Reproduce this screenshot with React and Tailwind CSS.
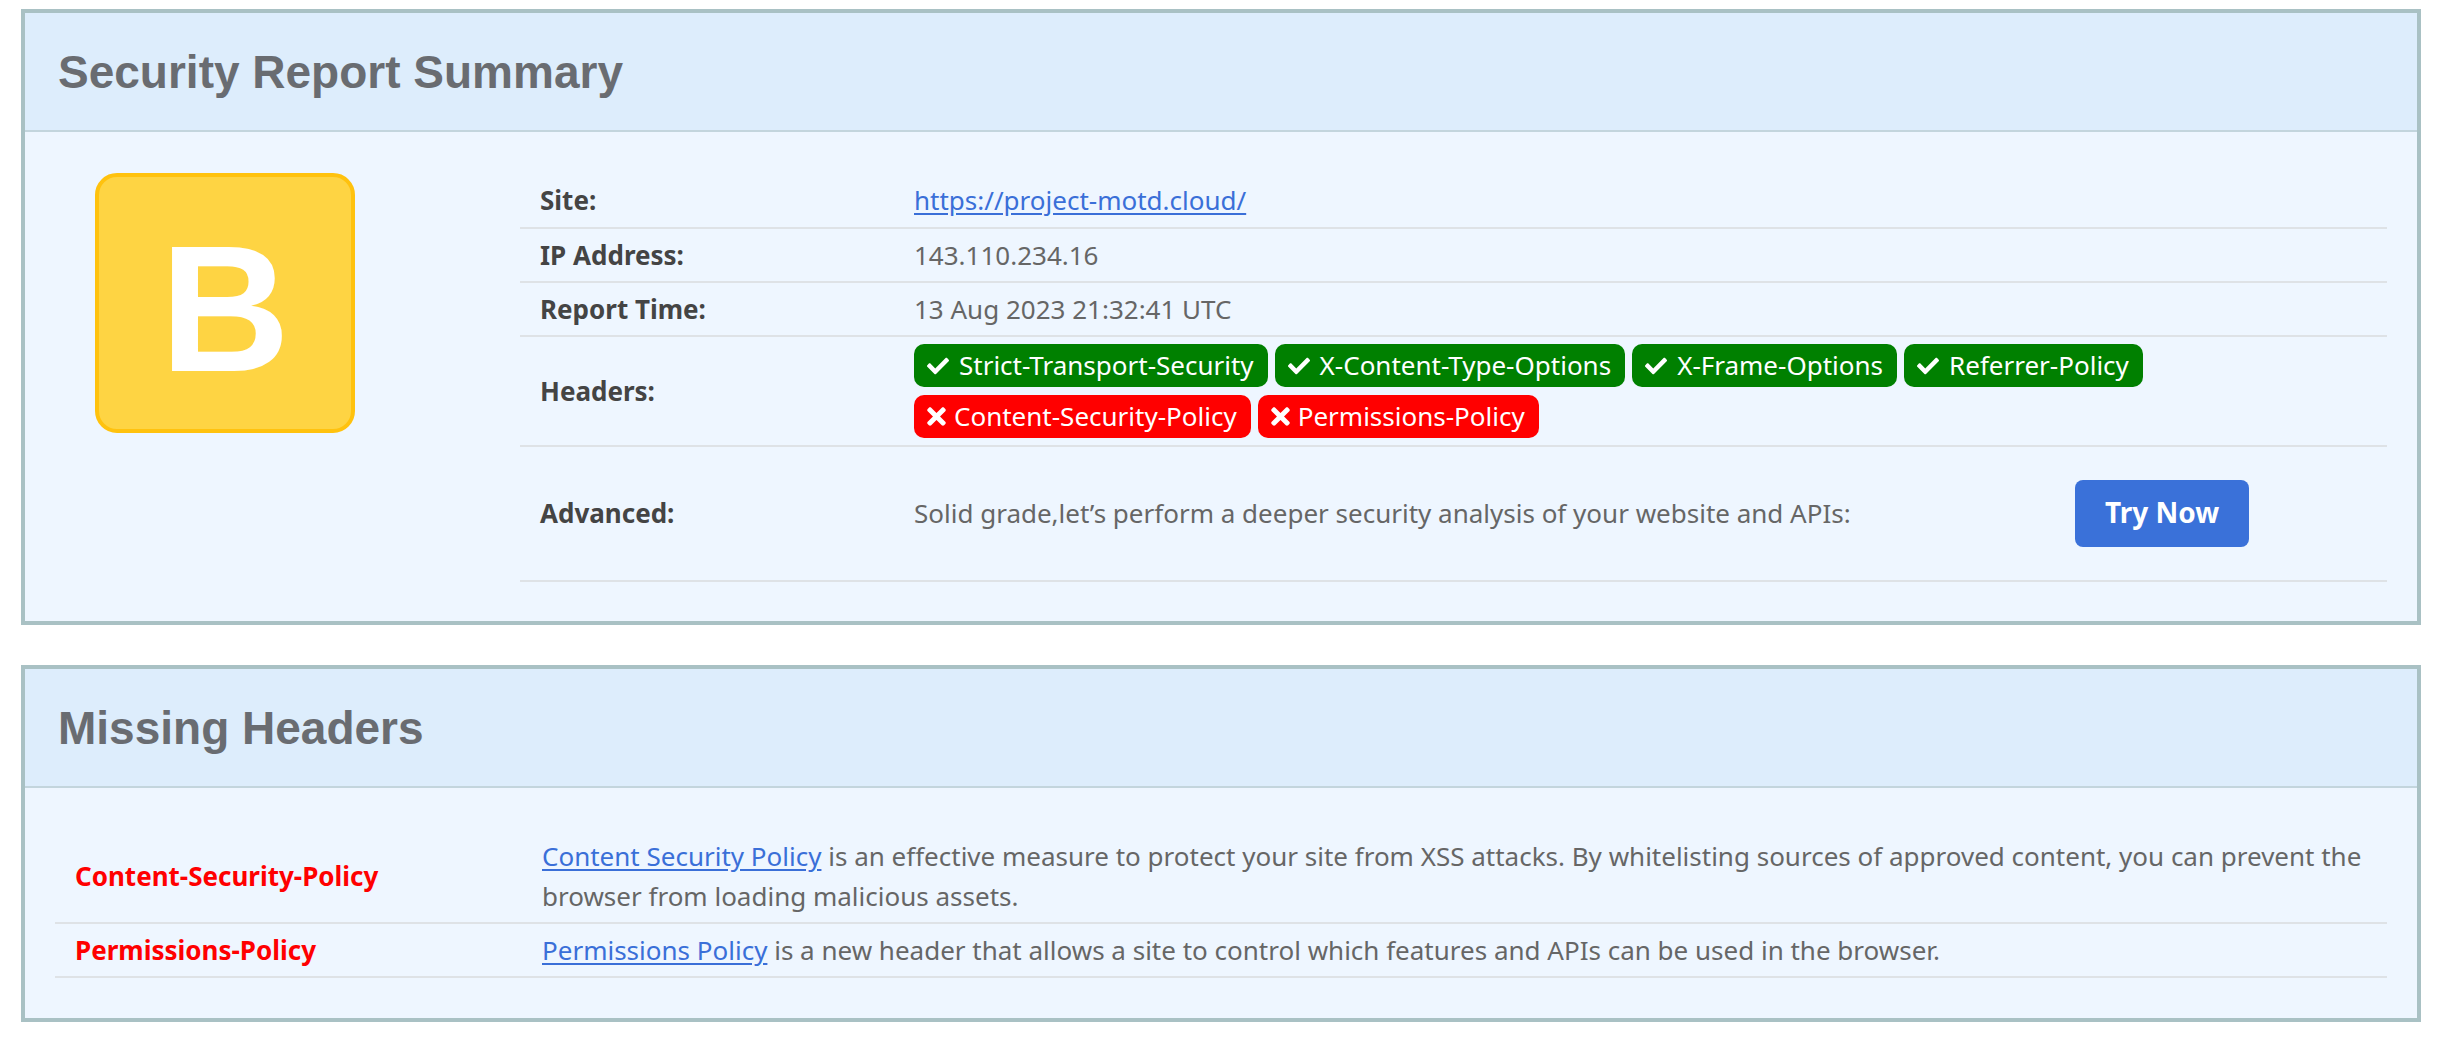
import React from "react";
import { FaCheck, FaTimes } from "react-icons/fa";

const GOOD = ["Strict-Transport-Security", "X-Content-Type-Options", "X-Frame-Options", "Referrer-Policy"];
const BAD = ["Content-Security-Policy", "Permissions-Policy"];

function Badge({ ok, children }) {
  return (
    <span
      className={
        ok
          ? "inline-flex h-[43px] items-center rounded-[10px] bg-[#008000] pl-[13px] pr-[14px] text-[26px] leading-none text-white"
          : "inline-flex h-[43px] items-center rounded-[10px] bg-[#ff0000] pl-[13px] pr-[14px] text-[26px] leading-none text-white"
      }
    >
      {ok ? (
        <FaCheck className="mr-[10px] h-[22px] w-[22px] shrink-0" />
      ) : (
        <FaTimes className="mr-[8px] h-[27px] w-[19px] shrink-0" />
      )}
      <span className="pb-[2px]">{children}</span>
    </span>
  );
}

function Row({ label, h, children }) {
  return (
    <div className={"flex items-center border-b-2 border-[#dee2e6] " + h}>
      <div className="w-[394px] shrink-0 pl-[20px] font-bold text-[#444444]">{label}</div>
      <div className="flex min-w-0 flex-1 items-center text-[#666666]">{children}</div>
    </div>
  );
}

function CardHeader({ title }) {
  return (
    <div className="flex h-[119px] items-center border-b-2 border-[#c3d5dd] bg-[#ddedfc] pl-[33px]">
      <h2 className="text-[46px] font-bold leading-none text-[#696c71]" style={{ fontFamily: '"Liberation Sans", Arial, sans-serif' }}>
        {title}
      </h2>
    </div>
  );
}

export default function App() {
  return (
    <div className="min-h-screen bg-white px-[21px] pt-[9px] text-[26px]" style={{ fontFamily: '"Noto Sans", "Open Sans", sans-serif' }}>
      {/* Summary card */}
      <div className="border-4 border-[#a9c1c4] bg-[#eef6ff]">
        <CardHeader title="Security Report Summary" />
        <div className="flex pb-[39px] pl-[70px] pr-[30px] pt-[41px]">
          <div className="flex h-[260px] w-[260px] shrink-0 items-center justify-center rounded-[22px] border-4 border-[#ffc20e] bg-[#fed443]">
            <span
              className="pt-[12px] text-[180px] font-bold leading-none text-white"
              style={{ fontFamily: '"Liberation Sans", Arial, sans-serif' }}
            >
              B
            </span>
          </div>
          <div className="ml-[165px] flex-1">
            <Row label="Site:" h="h-[56px]">
              <a href="#" className="text-[#3a6fd8] underline underline-offset-[3px]">
                https://project-motd.cloud/
              </a>
            </Row>
            <Row label="IP Address:" h="h-[54px]">
              143.110.234.16
            </Row>
            <Row label="Report Time:" h="h-[54px]">
              13 Aug 2023 21:32:41 UTC
            </Row>
            <Row label="Headers:" h="h-[110px]">
              <div className="flex flex-wrap gap-x-[7px] gap-y-[4px]">
                {GOOD.map((g) => (
                  <Badge key={g} ok>
                    {g}
                  </Badge>
                ))}
                <div className="w-full" />
                {BAD.map((b) => (
                  <Badge key={b}>{b}</Badge>
                ))}
              </div>
            </Row>
            <Row label="Advanced:" h="h-[135px]">
              <span>Solid grade,let’s perform a deeper security analysis of your website and APIs:</span>
              <button className="ml-auto mr-[138px] flex h-[67px] w-[174px] items-center justify-center rounded-[8px] bg-[#3a71d9] pb-[3px] text-[28px] font-bold text-white">
                Try Now
              </button>
            </Row>
          </div>
        </div>
      </div>

      {/* Missing headers card */}
      <div className="mt-[40px] border-4 border-[#a9c1c4] bg-[#eef6ff]">
        <CardHeader title="Missing Headers" />
        <div className="px-[30px] pb-[40px] pt-[42px]">
          <div className="flex items-center border-b-2 border-[#dee2e6] py-[6px]">
            <div className="w-[467px] shrink-0 pl-[20px] font-bold text-[#ff0000]">Content-Security-Policy</div>
            <div className="flex-1 pl-[20px] leading-[40px] text-[#666666]">
              <a href="#" className="text-[#3a6fd8] underline underline-offset-[3px]">
                Content Security Policy
              </a>{" "}
              is an effective measure to protect your site from XSS attacks. By whitelisting sources of approved content, you can prevent the browser from loading malicious assets.
            </div>
          </div>
          <div className="flex items-center border-b-2 border-[#dee2e6] py-[6px]">
            <div className="w-[467px] shrink-0 pl-[20px] font-bold text-[#ff0000]">Permissions-Policy</div>
            <div className="flex-1 pl-[20px] leading-[40px] text-[#666666]">
              <a href="#" className="text-[#3a6fd8] underline underline-offset-[3px]">
                Permissions Policy
              </a>{" "}
              is a new header that allows a site to control which features and APIs can be used in the browser.
            </div>
          </div>
        </div>
      </div>
    </div>
  );
}
